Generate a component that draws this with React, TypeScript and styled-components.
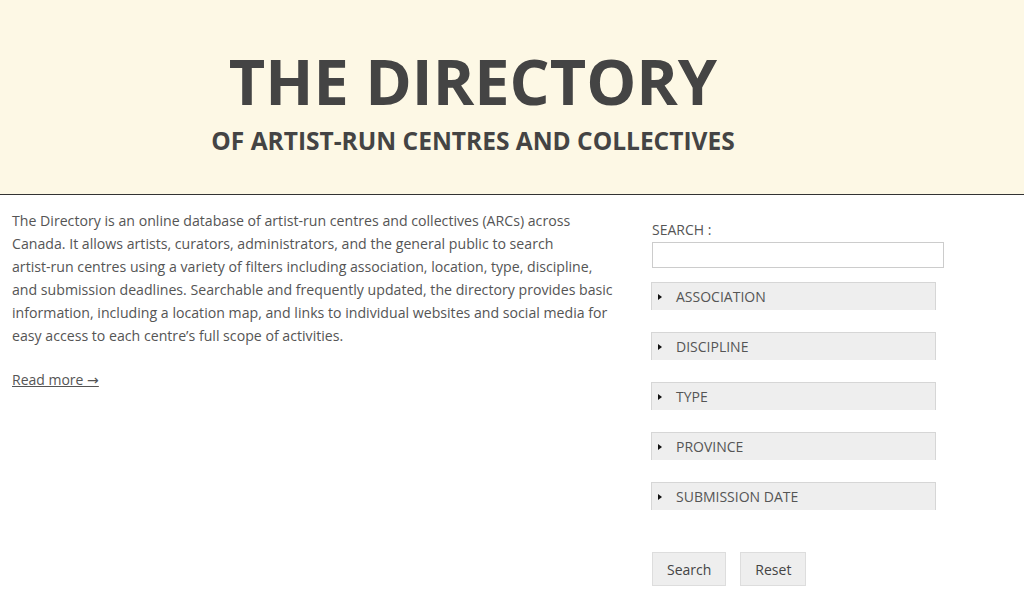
import React from "react";
import styled, { createGlobalStyle } from "styled-components";

const Global = createGlobalStyle`
  html, body { margin: 0; padding: 0; background: #fff; }
  body { font-family: "Open Sans", "DejaVu Sans", sans-serif; color: #555; }
  * { box-sizing: border-box; }
`;

const Header = styled.header`
  height: 195px;
  background: #fdf8e5;
  border-bottom: 1px solid #333;
  display: flex;
  flex-direction: column;
  align-items: center;
`;

const Title = styled.h1`
  margin: 45px 0 0 0;
  font-size: 63px;
  line-height: 71px;
  font-weight: 700;
  color: #444;
  transform: translateX(-39px);
`;

const Subtitle = styled.h2`
  margin: 10px 0 0 0;
  font-size: 24.5px;
  line-height: 30px;
  font-weight: 700;
  color: #444;
  transform: translateX(-39px);
`;

const Main = styled.main`
  display: flex;
  padding: 14px 0 0 12px;
`;

const Intro = styled.section`
  width: 612px;
  font-size: 14.15px;
  line-height: 23px;
  color: #555;
`;

const Para = styled.p`
  margin: 0;
`;

const ReadMore = styled.a`
  display: inline-block;
  margin-top: 21px;
  color: #555;
  text-decoration: underline;
  font-size: 14px;
`;

const Sidebar = styled.aside`
  margin-left: 27px;
  width: 292px;
  padding-top: 11px;
  display: flex;
  flex-direction: column;
`;

const Label = styled.label`
  font-size: 14px;
  line-height: 20px;
  color: #555;
  padding-left: 1px;
`;

const SearchInput = styled.input`
  margin-top: 2px;
  margin-left: 1px;
  width: 292px;
  height: 26px;
  border: 1px solid #ccc;
  background: #fff;
`;

const FilterList = styled.div`
  display: flex;
  flex-direction: column;
  gap: 22px;
  margin-top: 14px;
`;

const Filter = styled.div`
  width: 285px;
  height: 28px;
  background: #eee;
  border: 1px solid #d6d6d6;
  border-bottom: none;
  display: flex;
  align-items: center;
  padding-left: 6px;
  font-size: 14px;
  color: #555;
`;

const Arrow = styled.span`
  width: 0;
  height: 0;
  border-top: 3.5px solid transparent;
  border-bottom: 3.5px solid transparent;
  border-left: 4px solid #111;
  margin-right: 14px;
`;

const Buttons = styled.div`
  display: flex;
  gap: 14px;
  margin-top: 42px;
  padding-left: 1px;
`;

const Button = styled.button`
  height: 34px;
  padding: 0 14px;
  background: #eee;
  border: 1px solid #ddd;
  font-family: "Open Sans", sans-serif;
  font-size: 14px;
  color: #444;
`;

const filters = ["ASSOCIATION", "DISCIPLINE", "TYPE", "PROVINCE", "SUBMISSION DATE"];

export default function App() {
  return (
    <>
      <Global />
      <Header>
        <Title>THE DIRECTORY</Title>
        <Subtitle>OF ARTIST-RUN CENTRES AND COLLECTIVES</Subtitle>
      </Header>
      <Main>
        <Intro>
          <Para>
            The Directory is an online database of artist-run centres and collectives (ARCs) across
            <br />
            Canada. It allows artists, curators, administrators, and the general public to search
            <br />
            artist-run centres using a variety of filters including association, location, type, discipline,
            <br />
            and submission deadlines. Searchable and frequently updated, the directory provides basic
            <br />
            information, including a location map, and links to individual websites and social media for
            <br />
            easy access to each centre’s full scope of activities.
          </Para>
          <ReadMore href="#">Read more →</ReadMore>
        </Intro>
        <Sidebar>
          <Label>SEARCH :</Label>
          <SearchInput type="text" />
          <FilterList>
            {filters.map((f) => (
              <Filter key={f}>
                <Arrow />
                {f}
              </Filter>
            ))}
          </FilterList>
          <Buttons>
            <Button>Search</Button>
            <Button>Reset</Button>
          </Buttons>
        </Sidebar>
      </Main>
    </>
  );
}
